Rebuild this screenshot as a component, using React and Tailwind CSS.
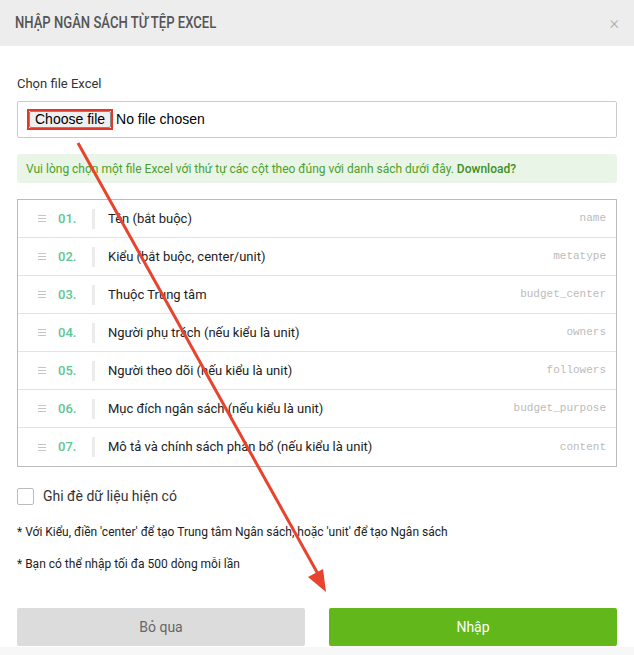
import React from "react";

const rows = [
  ["01.", "Tên (bắt buộc)", "name"],
  ["02.", "Kiểu (bắt buộc, center/unit)", "metatype"],
  ["03.", "Thuộc Trung tâm", "budget_center"],
  ["04.", "Người phụ trách (nếu kiểu là unit)", "owners"],
  ["05.", "Người theo dõi (nếu kiểu là unit)", "followers"],
  ["06.", "Mục đích ngân sách (nếu kiểu là unit)", "budget_purpose"],
  ["07.", "Mô tả và chính sách phân bổ (nếu kiểu là unit)", "content"],
];

export default function App() {
  return (
    <div className="relative w-[634px] h-[655px] bg-white overflow-hidden font-['Roboto',sans-serif] text-[#333]">
      <div className="h-[46px] bg-[#ededed] flex items-center justify-between pl-[15px] pr-[15px]">
        <div className="text-[17px] font-medium text-[#555] whitespace-nowrap origin-left scale-x-[0.77]">NHẬP NGÂN SÁCH TỪ TỆP EXCEL</div>
        <div className="text-[#aaa] text-[18px] leading-none font-light">×</div>
      </div>
      <div className="px-[17px]">
        <div className="mt-[30px] text-[13px] leading-[16px] text-[#333]">Chọn file Excel</div>
        <div className="mt-[9px] h-[37px] border border-[#ccc] rounded-[2px] flex items-center pl-[9px]">
          <div className="border-2 border-[#e0382d] p-0">
            <div className="bg-[#efefef] border border-[#888] rounded-[2px] px-[5px] h-[17px] flex items-center font-['Liberation_Sans',sans-serif] text-[14px] text-black">Choose file</div>
          </div>
          <div className="ml-[3px] font-['Liberation_Sans',sans-serif] text-[14px] text-black">No file chosen</div>
        </div>
        <div className="mt-[16px] h-[29px] bg-[#e9f6e7] rounded-[3px] flex items-center pl-[9px] text-[12px] text-[#4c9f2b]">
          Vui lòng chọn một file Excel với thứ tự các cột theo đúng với danh sách dưới đây.&nbsp;<span className="font-medium text-[#3f8f1f]">Download?</span>
        </div>
        <div className="mt-[16px] border border-[#bbb]">
          {rows.map((r, i) => (
            <div key={i} className={"h-[38px] flex items-center " + (i < rows.length - 1 ? "border-b border-[#e3e3e3]" : "")}>
              <div className="w-[40px] flex justify-end pr-[12px]">
                <svg width="8" height="9" viewBox="0 0 8 9">
                  <rect x="0" y="1" width="8" height="1" fill="#c4c4c4" />
                  <rect x="0" y="4" width="8" height="1" fill="#c4c4c4" />
                  <rect x="0" y="7" width="8" height="1" fill="#c4c4c4" />
                </svg>
              </div>
              <div className="w-[34px] text-[13px] font-medium text-[#62c592]">{r[0]}</div>
              <div className="w-[3px] h-[20px] bg-[#ebebeb]" />
              <div className="ml-[13px] flex-1 text-[13px] text-[#222]">{r[1]}</div>
              <div className="pr-[10px] font-['Liberation_Mono',monospace] text-[11px] text-[#bbb]">{r[2]}</div>
            </div>
          ))}
        </div>
        <div className="mt-[19px] flex items-center">
          <div className="w-[17px] h-[17px] border border-[#bbb] rounded-[2px]" />
          <div className="ml-[9px] text-[14px] text-[#333]">Ghi đè dữ liệu hiện có</div>
        </div>
        <div className="mt-[17px] text-[12px] text-[#222] leading-[16px]">* Với Kiểu, điền 'center' để tạo Trung tâm Ngân sách, hoặc 'unit' để tạo Ngân sách</div>
        <div className="mt-[16px] text-[12px] text-[#222] leading-[16px]">* Bạn có thể nhập tối đa 500 dòng mỗi lần</div>
        <div className="mt-[36px] flex gap-[24px]">
          <div className="flex-1 h-[38px] bg-[#dcdcdc] rounded-[2px] flex items-center justify-center text-[14px] text-[#666]">Bỏ qua</div>
          <div className="flex-1 h-[38px] bg-[#62b71b] rounded-[2px] flex items-center justify-center text-[14px] text-white">Nhập</div>
        </div>
      </div>
      <div className="absolute left-0 right-0 bottom-0 h-[8px] bg-[#f7f7f7]" />
      <svg className="absolute left-0 top-0 pointer-events-none" width="634" height="655">
        <line x1="78" y1="143" x2="318" y2="574" stroke="#e8432f" strokeWidth="3" />
        <polygon points="326,592 308,577 323,569" fill="#e8432f" />
      </svg>
    </div>
  );
}
